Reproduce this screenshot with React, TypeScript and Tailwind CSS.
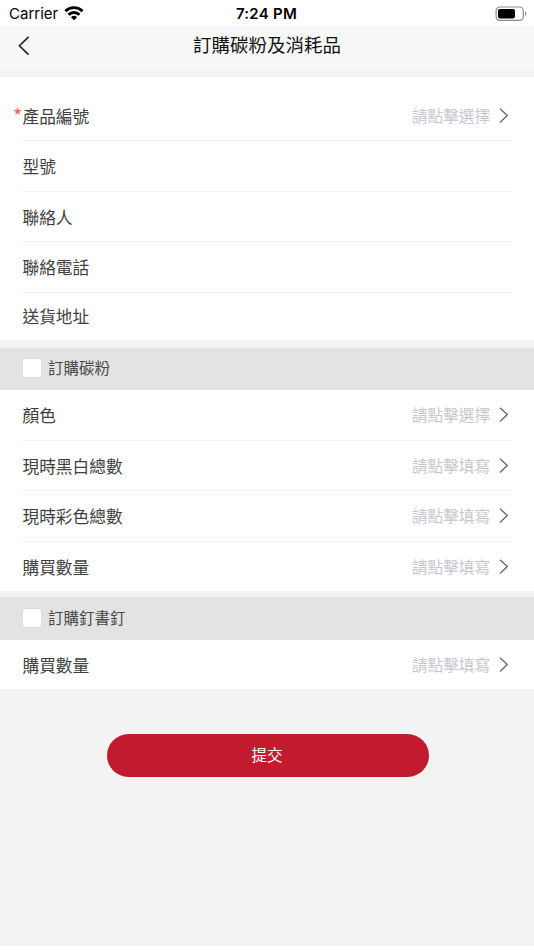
import clsx from "clsx";

type Row = {
    label: string;
    height: string;
    hint?: string;
    required?: boolean;
};

const contactRows: Row[] = [
    { label: "產品編號", height: "h-[50px]", hint: "請點擊選擇", required: true },
    { label: "型號", height: "h-[51px]" },
    { label: "聯絡人", height: "h-[50px]" },
    { label: "聯絡電話", height: "h-[51px]" },
    { label: "送貨地址", height: "h-[47px]" },
];

const tonerRows: Row[] = [
    { label: "顏色", height: "h-[51px]", hint: "請點擊選擇" },
    { label: "現時黑白總數", height: "h-[50px]", hint: "請點擊填寫" },
    { label: "現時彩色總數", height: "h-[51px]", hint: "請點擊填寫" },
    { label: "購買數量", height: "h-[49px] pt-px", hint: "請點擊填寫" },
];

const stapleRows: Row[] = [
    { label: "購買數量", height: "h-[49px] pt-[2px]", hint: "請點擊填寫" },
];

function WifiIcon() {
    return (
        <svg width="20" height="15" viewBox="0 0 20 15" fill="none" stroke="#000" strokeWidth="2.9">
            <path d="M1.4 5.1a12.3 12.3 0 0 1 17.2 0" />
            <path d="M4.5 8.7a8 8 0 0 1 11 0" />
            <path d="M10 14.2 6.9 11.3a4.5 4.5 0 0 1 6.2 0z" fill="#000" stroke="none" />
        </svg>
    );
}

function BatteryIcon() {
    return (
        <svg width="32" height="16" viewBox="0 0 32 16" fill="none">
            <rect x="1.1" y="1" width="27.2" height="13.4" rx="3.8" stroke="#8c8c8c" strokeWidth="1.2" />
            <rect x="3" y="3" width="17" height="9.4" rx="1.8" fill="#000" />
            <path d="M30 5.2c1.8.7 1.8 4.1 0 4.8z" fill="#8c8c8c" />
        </svg>
    );
}

function StatusBar() {
    return (
        <div className="grid h-[26px] grid-cols-3 items-center bg-white pl-[9px] pr-[7px] font-['Inter','Liberation_Sans',sans-serif] text-black">
            <div className="flex items-center gap-[6px]">
                <span className="pt-px text-[15px] leading-[26px]">Carrier</span>
                <WifiIcon />
            </div>
            <span className="pr-[3px] pt-px text-center text-[15px] font-semibold leading-[24px] tracking-[0.25px]">7:24 PM</span>
            <div className="flex justify-end">
                <BatteryIcon />
            </div>
        </div>
    );
}

function Header() {
    return (
        <header className="relative flex h-11 items-start justify-center bg-[#f7f7f7]">
            <button className="absolute left-[17px] top-[10px]" aria-label="返回">
                <svg width="14" height="20" viewBox="0 0 14 20" fill="none" stroke="#222" strokeWidth="1.6">
                    <path d="M11.6.9 2.4 9.8l9.2 8.8" />
                </svg>
            </button>
            <h1 className="text-[18.5px] leading-[36px] text-[#111]">訂購碳粉及消耗品</h1>
        </header>
    );
}

function FormRow({ row, last }: { row: Row; last: boolean }) {
    return (
        <div className={clsx("mx-[22px] flex items-center justify-between border-b", row.height, last ? "border-white" : "border-[#f3f3f3]")}>
            <div className="relative pl-[0.5px] text-[16.7px] leading-6 text-[#404040]">
                {row.required && <span className="absolute -left-[9px] top-0 text-[20px] text-[#ff5a50]">*</span>}
                {row.label}
            </div>
            {row.hint && (
                <div className="flex items-center gap-[9px] pr-[3px] text-[15.6px] text-[#c5c7cf]">
                    <span className="pb-px leading-[23px]">{row.hint}</span>
                    <svg width="10" height="16" viewBox="0 0 10 16" fill="none" stroke="#666" strokeWidth="1.3">
                        <path d="m1 .8 7.3 6.8L1 14.4" />
                    </svg>
                </div>
            )}
        </div>
    );
}

function FormGroup({ rows, className }: { rows: Row[]; className?: string }) {
    return (
        <div className={clsx("bg-white", className)}>
            {rows.map((row, index) => (
                <FormRow key={row.label} row={row} last={index === rows.length - 1} />
            ))}
        </div>
    );
}

function SectionTitle({ title, className }: { title: string; className: string }) {
    return (
        <label className={clsx("flex items-center gap-[6px] bg-[#e3e3e3] pl-[22px] text-[15.5px] text-[#484848]", className)}>
            <input type="checkbox" className="size-5 appearance-none rounded-[3px] border border-[#dadada] bg-white" />
            {title}
        </label>
    );
}

export default function App() {
    return (
        <div className="flex h-[950px] w-[534px] flex-col overflow-hidden bg-white font-['Noto_Sans_CJK_TC',sans-serif]">
            <StatusBar />
            <Header />
            <main className="h-[876px] bg-[#f3f3f3] pt-[7px]">
                <FormGroup rows={contactRows} className="pt-[14px]" />
                <SectionTitle title="訂購碳粉" className="mt-2 h-[42px] pb-[3px]" />
                <FormGroup rows={tonerRows} />
                <SectionTitle title="訂購釘書釘" className="mt-[6px] h-[43px] pb-[2px]" />
                <FormGroup rows={stapleRows} />
                <button className="ml-[107px] mt-[45px] flex h-[43px] w-[322px] items-center justify-center rounded-full bg-[#c21b2e] pb-[2px] pr-[2px] text-[15.5px] text-white">
                    提交
                </button>
            </main>
        </div>
    );
}
